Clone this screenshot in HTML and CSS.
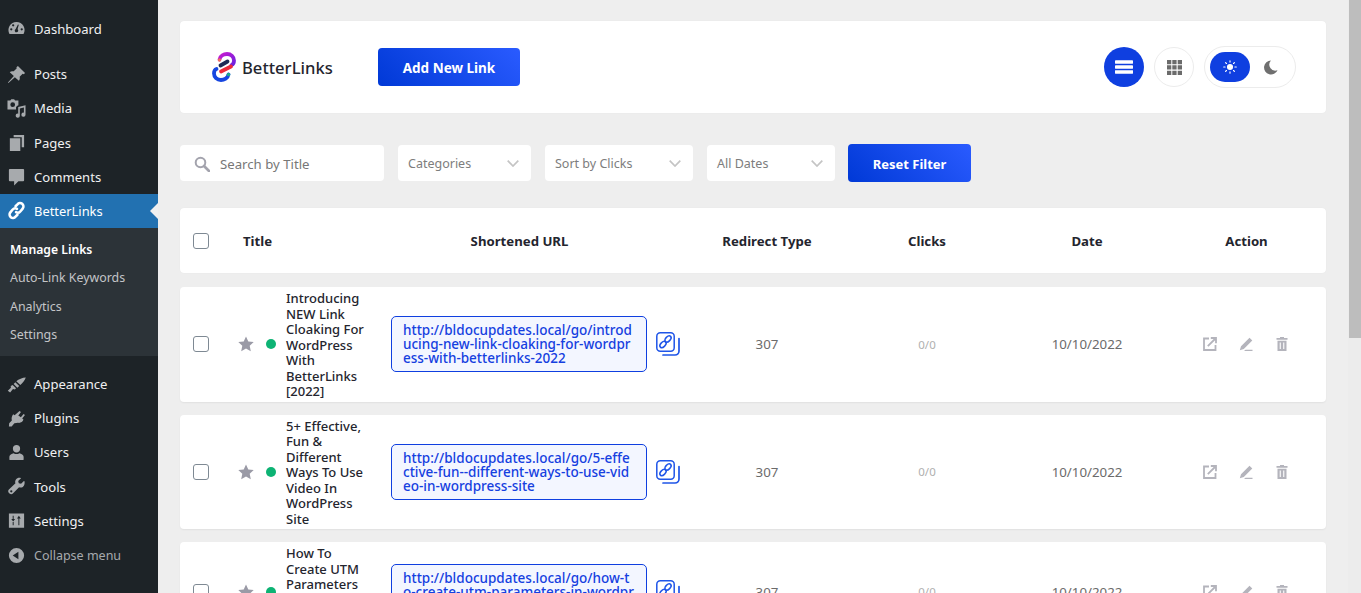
FILE: index.html
```html
<!DOCTYPE html>
<html lang="en">
<head>
<meta charset="utf-8">
<title>BetterLinks</title>
<link rel="stylesheet" href="styles.css">
</head>
<body>
<div class="page">
<nav class="sidebar">
  <a class="menu first"><svg class="mi" viewBox="0 0 20 20"><path fill-rule="evenodd" d="M10 2a8.500 8.500 0 0 0-7.400 12.700h14.800A8.500 8.500 0 0 0 10 2zm-5.500 9a1.200 1.200 0 1 1 0-2.400 1.200 1.200 0 0 1 0 2.400zm2-4.200a1.200 1.200 0 1 1 0-2.400 1.200 1.200 0 0 1 0 2.400zM10 13a1.800 1.800 0 0 1-1-3.300l2.500-5 .9.300-1.300 4.800A1.800 1.800 0 0 1 10 13zm5.500-2a1.200 1.200 0 1 1 0-2.400 1.200 1.200 0 0 1 0 2.400z"/></svg>Dashboard</a>
  <a class="menu gap"><svg class="mi" viewBox="0 0 20 20"><path d="M11.500 1l7.500 7.500-1.300 1.200-1.200-.5-3.200 3.200c.5 1.700.1 3.200-.8 4.100L8.300 12.800 1.500 19l-.5-.5 6.200-6.800-4.300-4.200c.9-.9 2.500-1.300 4.200-.8l3.200-3.200-.4-1.100z"/></svg>Posts</a>
  <a class="menu"><svg class="mi" viewBox="0 0 20 20"><path fill-rule="evenodd" d="M.5 1.500h3l1-1.200h3l1 1.200h3.500v5.200a3.500 3.500 0 0 0-2.500 2v2.300H.5zM6 3.500a2.500 2.500 0 1 0 0 5 2.500 2.500 0 0 0 0-5z"/><path d="M19.500 6.500v10a2.200 2.200 0 1 1-1.700-2.100V9l-4.300 1v7.500a2.200 2.200 0 1 1-1.700-2.100V8.300z"/></svg>Media</a>
  <a class="menu"><svg class="mi" viewBox="0 0 20 20"><path d="M7 2h11v13h-2.500V4.500H7zM3 5.500h11V19H3z"/></svg>Pages</a>
  <a class="menu"><svg class="mi" viewBox="0 0 20 20"><path d="M3 2h14a1 1 0 0 1 1 1v11a1 1 0 0 1-1 1h-5l-4.500 4.500V15H3a1 1 0 0 1-1-1V3a1 1 0 0 1 1-1z"/></svg>Comments</a>
  <a class="menu current"><svg class="mi" viewBox="0 0 20 20" fill="none" stroke="#fff" stroke-width="2.700" stroke-linecap="round"><path d="M9 5.500l2-2a3.500 3.500 0 0 1 5.500 4.500l-2.500 3a3.500 3.500 0 0 1-4.500.8"/><path d="M11 14.500l-2 2A3.500 3.500 0 0 1 3.500 12l2.500-3a3.500 3.500 0 0 1 4.500-.8"/></svg>BetterLinks</a>
  <div class="submenu">
    <a class="sub on">Manage Links</a>
    <a class="sub">Auto-Link Keywords</a>
    <a class="sub">Analytics</a>
    <a class="sub">Settings</a>
  </div>
  <a class="menu"><svg class="mi" viewBox="0 0 20 20"><path d="M19.800 2.500c-1.200 3-3.500 6.200-5.800 8L9.800 6.500c2.500-2.300 6.500-3.800 10-4zM8.700 7.500l4.200 4.200-2 1.700L7 9.500zM6 10.500l3.500 3.500-1.200 1.200-2-.4-3 3.700-2.500-2 3.300-3.200-.2-1.800z"/></svg>Appearance</a>
  <a class="menu"><svg class="mi" viewBox="0 0 20 20"><path d="M13.200 2l1.500 1.100-2.800 3.700 2.700 2 2.800-3.600 1.500 1.100-2.900 3.800 1.300 1c-.7 2.500-3.300 4-5.800 3.400L7.800 15 4.900 18.500H2l.3-3.500 2.800-3C4.500 9.800 5 7.500 6.500 5.500l1.500 1.200z"/></svg>Plugins</a>
  <a class="menu"><svg class="mi" viewBox="0 0 20 20"><path d="M10 2a3.800 3.800 0 0 1 3.800 4.200c-.2 2.200-1.700 3.800-3.800 3.800s-3.600-1.600-3.800-3.800A3.800 3.800 0 0 1 10 2zM2.500 17v-2.500c0-2 2.500-3 4.500-3.700 1.800 1.200 4.200 1.200 6 0 2 .7 4.500 1.700 4.500 3.700V17c0 .6-.5 1-1 1h-13c-.5 0-1-.4-1-1z"/></svg>Users</a>
  <a class="menu"><svg class="mi" viewBox="0 0 20 20"><path fill-rule="evenodd" d="M17.800 4.200l-3 3-2.400-.6-.6-2.400 3-3c-2-.7-4.300-.1-5.400 1.400-.9 1.200-1 2.800-.5 4.100L2 13.200c-1 1-1 2.500 0 3.600l.7.600c1 1 2.500 1 3.500 0l6.500-6.500c1.300.5 2.900.3 4-.5 1.700-1.200 2.300-3.900 1.600-6.200zM4.500 16.300a1.200 1.200 0 1 1 0-2.400 1.200 1.200 0 0 1 0 2.400z"/></svg>Tools</a>
  <a class="menu"><svg class="mi" viewBox="0 0 20 20"><path fill-rule="evenodd" d="M2 2.500h16v15H2zM6 5v3.500H4.500L6.500 11l2-2.500H7V5zm6.500 0v.1L10.500 8H12v7h1V8h1.500zM6 11.500V15h1v-3.500z"/></svg>Settings</a>
  <a class="menu collapse"><svg class="mi" viewBox="0 0 20 20"><path fill-rule="evenodd" d="M10 2a8 8 0 1 1 0 16 8 8 0 0 1 0-16zm2 4l-6 4 6 4z"/></svg>Collapse menu</a>
</nav>

<main class="main">
  <header class="card topbar">
    <div class="brand">
      <svg class="logo" viewBox="0 0 24 30" fill="none" stroke-width="3.800" stroke-linecap="round">
        <defs>
          <linearGradient id="lp" x1="0" y1="0" x2="1" y2="1"><stop offset="0" stop-color="#c81ad0"/><stop offset="1" stop-color="#6b22e0"/></linearGradient>
        </defs>
        <path d="M7.500 7.500C8 3.500 12 2 15 2c4 0 7 3 7 6.500 0 2.500-1 4-2.500 4.500" stroke="url(#lp)"/>
        <path d="M16.500 22.500C16 26 12 28 9 28c-4 0-7-3-7-6.500 0-2.500 1-4 2.500-4.500" stroke="#1746e0"/>
        <path d="M8.500 13.500l7-4" stroke="#1f2a55"/>
        <path d="M9 19.500l10-5" stroke="#ee2a3a"/>
        <circle cx="7.500" cy="8" r="1.700" fill="#f0705a" stroke="none"/>
        <circle cx="16.500" cy="22.500" r="1.800" fill="#1fa88a" stroke="none"/>
      </svg>
      <span class="brand-name">BetterLinks</span>
    </div>
    <button class="btn add">Add New Link</button>
    <div class="views">
      <span class="round active"><svg viewBox="0 0 20 20" class="ico18" fill="#fff"><rect x="0" y="2.500" width="20" height="3.900" rx=".5"/><rect x="0" y="8" width="20" height="3.900" rx=".5"/><rect x="0" y="13.500" width="20" height="3.900" rx=".5"/></svg></span>
      <span class="round plain"><svg viewBox="0 0 15 15" class="ico15" fill="#6b6b6b"><path d="M0 0h4.300v4.300H0zM5.300 0h4.300v4.300H5.300zM10.700 0H15v4.300h-4.300zM0 5.300h4.300v4.300H0zM5.300 5.300h4.300v4.300H5.300zM10.700 5.300H15v4.300h-4.300zM0 10.700h4.300V15H0zM5.300 10.700h4.300V15H5.300zM10.700 10.700H15V15h-4.300z"/></svg></span>
      <span class="theme">
        <span class="pill"><svg viewBox="0 0 16 16" class="ico14" fill="#fff" stroke="#fff" stroke-width="1.300" stroke-linecap="round"><circle cx="8" cy="8" r="3.500" stroke="none"/><path d="M8 .8v1.600M8 13.600v1.600M.8 8h1.600M13.600 8h1.600M2.900 2.900L4 4M12 12l1.100 1.100M2.900 13.100L4 12M12 4l1.100-1.100"/></svg></span>
        <span class="moon"><svg viewBox="0 0 16 16" class="ico15" fill="#6f6f6f"><path d="M8.500.5a7.500 7.500 0 1 0 7 10.500A6.500 6.500 0 0 1 8.500.5z"/></svg></span>
      </span>
    </div>
  </header>

  <section class="filters">
    <div class="search"><svg viewBox="0 0 16 16" class="ico16" fill="none" stroke="#a3a3ad" stroke-width="2"><circle cx="6.500" cy="6.500" r="4.800"/><path d="M10 10l5 5" stroke-width="2.600" stroke-linecap="round"/></svg><span>Search by Title</span></div>
    <div class="select s1"><span>Categories</span><svg class="chev" viewBox="0 0 12 7" fill="none" stroke="#c4c4c4" stroke-width="1.700"><path d="M.7.7L6 6l5.300-5.300"/></svg></div>
    <div class="select s2"><span>Sort by Clicks</span><svg class="chev" viewBox="0 0 12 7" fill="none" stroke="#c4c4c4" stroke-width="1.700"><path d="M.7.7L6 6l5.300-5.300"/></svg></div>
    <div class="select s3"><span>All Dates</span><svg class="chev" viewBox="0 0 12 7" fill="none" stroke="#c4c4c4" stroke-width="1.700"><path d="M.7.7L6 6l5.300-5.300"/></svg></div>
    <button class="btn reset">Reset Filter</button>
  </section>

  <section class="card grid thead">
    <div class="title-cell"><span class="check"></span><span class="th-title">Title</span></div>
    <div class="th url-th">Shortened URL</div>
    <div class="th">Redirect Type</div>
    <div class="th">Clicks</div>
    <div class="th">Date</div>
    <div class="th">Action</div>
  </section>

  <article class="card grid row">
    <div class="title-cell"><span class="check"></span><svg class="star" viewBox="0 0 16 16" fill="#9a9aa6"><path d="M8 .5l2.300 5 5.400.6-4 3.700 1.100 5.400L8 12.500l-4.800 2.700 1.100-5.400-4-3.700 5.400-.6z"/></svg><span class="dot"></span><span class="name">Introducing NEW Link Cloaking For WordPress With BetterLinks [2022]</span></div>
    <div class="url-cell"><a class="url">http://bldocupdates.local/go/introducing-new-link-cloaking-for-wordpress-with-betterlinks-2022</a><svg class="copy" viewBox="0 0 24 24" fill="none" stroke="#1f55e8"><rect x=".8" y=".8" width="17.400" height="18.400" rx="3.500" stroke-width="1.500"/><path d="M23 6.500V19a4 4 0 0 1-4 4H7" stroke-width="1.700" stroke-linecap="round"/><ellipse cx="7" cy="12.500" rx="3.700" ry="2.300" transform="rotate(-45 7 12.500)" stroke-width="1.500"/><ellipse cx="12" cy="7" rx="3.700" ry="2.300" transform="rotate(-45 12 7)" stroke-width="1.500"/></svg></div>
    <div class="cell">307</div>
    <div class="cell clicks">0/0</div>
    <div class="cell">10/10/2022</div>
    <div class="actions"><svg viewBox="0 0 14 14" class="ico14" fill="none" stroke="#b4b4bc" stroke-width="1.800"><path d="M6 1.500H1v11.500h11.500V8"/><path d="M4.800 9.200L12 2M7.800 1h5.200v5.200" /></svg><svg viewBox="0 0 14 14" class="ico14" fill="#b4b4bc"><path d="M10.500.7l2.800 2.800-8.500 8.500-4 1.300 1.200-4zM6.500 12.700h7v1.200h-8.500z"/></svg><svg viewBox="0 0 14 14" class="ico14" fill="#b4b4bc"><path d="M5 0h4v1h3.500v1.800h-11V1H5zM2.500 3.800h9V14h-9zM4.700 5.500V12h1.100V5.500zm3.500 0V12h1.100V5.500z" fill-rule="evenodd"/></svg></div>
  </article>

  <article class="card grid row">
    <div class="title-cell"><span class="check"></span><svg class="star" viewBox="0 0 16 16" fill="#9a9aa6"><path d="M8 .5l2.300 5 5.400.6-4 3.700 1.100 5.400L8 12.500l-4.800 2.700 1.100-5.400-4-3.700 5.400-.6z"/></svg><span class="dot"></span><span class="name">5+ Effective, Fun &amp; Different Ways To Use Video In WordPress Site</span></div>
    <div class="url-cell"><a class="url">http://bldocupdates.local/go/5-effective-fun--different-ways-to-use-video-in-wordpress-site</a><svg class="copy" viewBox="0 0 24 24" fill="none" stroke="#1f55e8"><rect x=".8" y=".8" width="17.400" height="18.400" rx="3.500" stroke-width="1.500"/><path d="M23 6.500V19a4 4 0 0 1-4 4H7" stroke-width="1.700" stroke-linecap="round"/><ellipse cx="7" cy="12.500" rx="3.700" ry="2.300" transform="rotate(-45 7 12.500)" stroke-width="1.500"/><ellipse cx="12" cy="7" rx="3.700" ry="2.300" transform="rotate(-45 12 7)" stroke-width="1.500"/></svg></div>
    <div class="cell">307</div>
    <div class="cell clicks">0/0</div>
    <div class="cell">10/10/2022</div>
    <div class="actions"><svg viewBox="0 0 14 14" class="ico14" fill="none" stroke="#b4b4bc" stroke-width="1.800"><path d="M6 1.500H1v11.500h11.500V8"/><path d="M4.800 9.200L12 2M7.800 1h5.200v5.200" /></svg><svg viewBox="0 0 14 14" class="ico14" fill="#b4b4bc"><path d="M10.500.7l2.800 2.800-8.500 8.500-4 1.300 1.200-4zM6.500 12.700h7v1.200h-8.500z"/></svg><svg viewBox="0 0 14 14" class="ico14" fill="#b4b4bc"><path d="M5 0h4v1h3.500v1.800h-11V1H5zM2.500 3.800h9V14h-9zM4.700 5.500V12h1.100V5.500zm3.500 0V12h1.100V5.500z" fill-rule="evenodd"/></svg></div>
  </article>

  <article class="card grid row">
    <div class="title-cell"><span class="check"></span><svg class="star" viewBox="0 0 16 16" fill="#9a9aa6"><path d="M8 .5l2.300 5 5.400.6-4 3.700 1.100 5.400L8 12.500l-4.800 2.700 1.100-5.400-4-3.700 5.400-.6z"/></svg><span class="dot"></span><span class="name">How To Create UTM Parameters In WordPress For Better Tracking</span></div>
    <div class="url-cell"><a class="url">http://bldocupdates.local/go/how-to-create-utm-parameters-in-wordpress-for-better-tracking</a><svg class="copy" viewBox="0 0 24 24" fill="none" stroke="#1f55e8"><rect x=".8" y=".8" width="17.400" height="18.400" rx="3.500" stroke-width="1.500"/><path d="M23 6.500V19a4 4 0 0 1-4 4H7" stroke-width="1.700" stroke-linecap="round"/><ellipse cx="7" cy="12.500" rx="3.700" ry="2.300" transform="rotate(-45 7 12.500)" stroke-width="1.500"/><ellipse cx="12" cy="7" rx="3.700" ry="2.300" transform="rotate(-45 12 7)" stroke-width="1.500"/></svg></div>
    <div class="cell">307</div>
    <div class="cell clicks">0/0</div>
    <div class="cell">10/10/2022</div>
    <div class="actions"><svg viewBox="0 0 14 14" class="ico14" fill="none" stroke="#b4b4bc" stroke-width="1.800"><path d="M6 1.500H1v11.500h11.500V8"/><path d="M4.800 9.200L12 2M7.800 1h5.200v5.200" /></svg><svg viewBox="0 0 14 14" class="ico14" fill="#b4b4bc"><path d="M10.500.7l2.800 2.800-8.500 8.500-4 1.300 1.200-4zM6.500 12.700h7v1.200h-8.500z"/></svg><svg viewBox="0 0 14 14" class="ico14" fill="#b4b4bc"><path d="M5 0h4v1h3.500v1.800h-11V1H5zM2.500 3.800h9V14h-9zM4.700 5.500V12h1.100V5.500zm3.500 0V12h1.100V5.500z" fill-rule="evenodd"/></svg></div>
  </article>
</main>

<div class="scrollbar"><div class="thumb"></div></div>
</div>
</body>
</html>
```
FILE: styles.css
```css
* { box-sizing: border-box; }
html, body { margin: 0; height: 100%; overflow: hidden; }
body { font-family: "Noto Sans", "Open Sans", sans-serif; font-size: 13px; color: #1d2327; background: #eeeeee; }
.page { display: flex; height: 593px; overflow: hidden; }

.sidebar { width: 158px; flex: none; background: #1d2327; color: #f0f0f1; font-size: 13.100px; padding-top: 12px; }
.menu { display: flex; align-items: center; height: 34.200px; padding-left: 7px; gap: 8px; }
.menu.gap { margin-top: 11px; }
.mi { width: 19px; height: 19px; fill: #a7aaad; flex: none; }
.menu.current { background: #2271b1; color: #fff; position: relative; height: 34px; font-size: 12.900px; }
.menu.current .mi { fill: none; }
.menu.current::after { content: ""; position: absolute; right: 0; top: 9px; border: 8px solid transparent; border-right-color: #f0f0f0; border-left-width: 0; }
.submenu { background: #2c3338; height: 128px; padding-top: 7px; color: #c3c4c7; font-size: 12.400px; }
.sub { display: flex; align-items: center; height: 28.500px; padding-left: 10px; }
.sub.on { color: #fff; font-weight: 600; font-size: 12.200px; }
.submenu + .menu { margin-top: 11px; }
.collapse { color: #a7aaad; font-size: 12.500px; padding-top: 1px; }

.main { width: 1146px; margin: 21px 0 0 22px; flex: none; }
.card { background: #fff; border-radius: 4px; }
.topbar { height: 92px; display: flex; align-items: center; padding: 0 30px 0 32px; box-shadow: 0 0 1px rgba(0,0,0,.08); }
.brand { display: flex; align-items: center; gap: 6px; width: 166px; }
.logo { width: 24px; height: 30px; }
.brand-name { font-size: 16.600px; color: #24252e; font-weight: 500; }
.btn { border: 0; color: #fff; font-family: inherit; font-weight: 700; font-size: 13px; border-radius: 4px; background: linear-gradient(45deg, #0039d6, #2a5bff); padding: 1px 0 0; }
.add { width: 142px; height: 38px; font-size: 13.500px; }
.views { margin-left: auto; display: flex; align-items: center; gap: 10px; }
.round { width: 40px; height: 40px; border-radius: 50%; display: flex; align-items: center; justify-content: center; }
.round.active { background: #0f3fe0; }
.round.plain { border: 1px solid #ececec; }
.ico18 { width: 18px; height: 18px; }
.ico15 { width: 15px; height: 15px; }
.ico14 { width: 14px; height: 14px; }
.ico16 { width: 16px; height: 16px; }
.theme { width: 92px; height: 42px; border: 1px solid #ececec; border-radius: 21px; display: flex; align-items: center; padding-left: 5px; }
.pill { width: 40px; height: 30px; border-radius: 15px; background: #0f3fe0; display: flex; align-items: center; justify-content: center; }
.moon { width: 40px; display: flex; justify-content: center; }

.filters { display: flex; align-items: center; margin-top: 31px; height: 38px; font-size: 12.500px; color: #7d7d7d; }
.search { width: 204px; height: 36px; background: #fff; border-radius: 4px; display: flex; align-items: center; padding: 1px 0 0 14px; gap: 10px; color: #777; font-size: 13.200px; }
.select { height: 36px; background: #fff; border-radius: 4px; display: flex; align-items: center; justify-content: space-between; padding: 0 12px 0 10px; margin-left: 14px; }
.s1 { width: 133px; }
.s2 { width: 148px; }
.s3 { width: 128px; }
.chev { width: 12px; height: 7px; }
.reset { width: 123px; height: 38px; margin-left: 13px; }

.grid { display: grid; grid-template-columns: 200px 307px 160px 160px 160px 159px; align-items: center; }
.thead { height: 65px; margin-top: 26px; font-weight: 700; font-size: 13.200px; color: #24252e; box-shadow: 0 0 1px rgba(0,0,0,.08); }
.title-cell { display: flex; align-items: center; padding-left: 13px; }
.check { width: 16px; height: 16px; border: 1px solid #7e8993; border-radius: 3px; flex: none; background: #fff; }
.th-title { margin-left: 34px; }
.th { text-align: center; }
.url-th { padding-right: 28px; }
.row { padding: 3px 0; margin-top: 13px; box-shadow: 0 1px 2px rgba(0,0,0,.06); }
.thead + .row { margin-top: 14px; }
.star { width: 16px; height: 16px; margin-left: 29px; flex: none; }
.dot { width: 10px; height: 10px; border-radius: 50%; background: #0db374; margin-left: 12px; flex: none; }
.name { width: 84px; margin: 1px 0 -1px 10px; flex: none; line-height: 15.500px; font-size: 13px; font-weight: 500; color: #24252e; }
.url-cell { display: flex; align-items: center; padding-left: 11px; }
.url { width: 256px; flex: none; height: 56px; border: 1px solid #0f3fe0; border-radius: 5px; background: #f3f6ff; padding: 6px 11px; color: #1540e0; font-weight: 500; font-size: 13.500px; line-height: 14px; word-break: break-all; }
.copy { width: 24px; height: 24px; margin-left: 9px; flex: none; }
.cell { text-align: center; color: #6b6b6b; font-size: 13.300px; }
.clicks { color: #b0b0b0; font-size: 11.500px; }
.actions { display: flex; justify-content: center; gap: 22px; padding-right: 2px; }

.scrollbar { width: 13px; margin-left: 22px; flex: none; background: #ececec; }
.thumb { height: 338px; margin-left: 1px; background: #bdbdbd; }
```
